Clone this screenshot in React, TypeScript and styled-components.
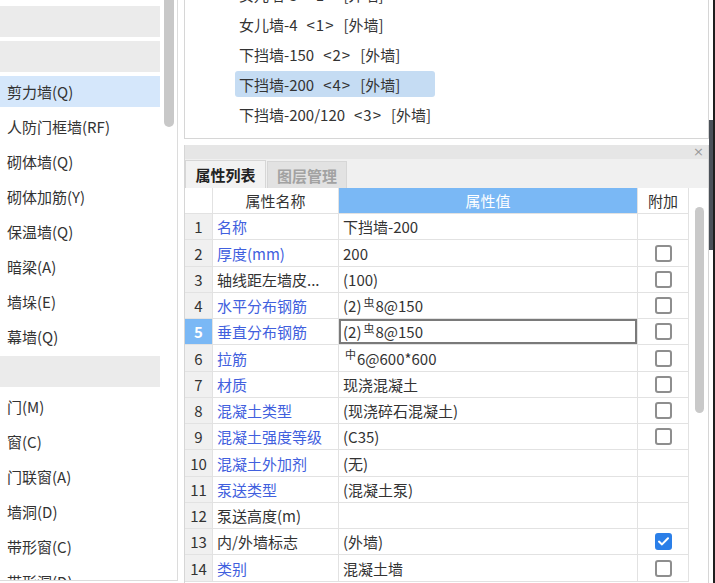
import React from "react";
import styled, { createGlobalStyle } from "styled-components";

const Global = createGlobalStyle`
  html, body { margin: 0; padding: 0; background: #fff; }
  body { font-family: "Noto Sans CJK SC", "Noto Sans", sans-serif; color: #333; }
  * { box-sizing: border-box; }
`;

const Root = styled.div`
  display: flex;
  width: 715px;
  height: 583px;
  overflow: hidden;
  background: #fff;
  font-size: 15px;
`;

/* ---------- left category panel ---------- */
const LeftPanel = styled.div`
  width: 178px;
  height: 581px;
  flex-shrink: 0;
  display: flex;
  border-right: 1px solid #dcdcdc;
  border-bottom: 1px solid #dcdcdc;
  overflow: hidden;
`;

const CatList = styled.div`
  width: 164px;
  padding-top: 4px;
  display: flex;
  flex-direction: column;
`;

type CatKind = "plain" | "group" | "selected";

const CatItem = styled.div<{ $kind: CatKind }>`
  flex-shrink: 0;
  width: 160px;
  height: 31px;
  margin: 2px 0;
  padding-left: 7px;
  line-height: 31px;
  white-space: nowrap;
  color: #333;
  background: ${(p) =>
    p.$kind === "group" ? "#ebebeb" : p.$kind === "selected" ? "#d5e7fb" : "transparent"};
`;

const VTrack = styled.div`
  width: 13px;
  flex-shrink: 0;
`;

const VThumb = styled.div<{ $h: number }>`
  width: 10px;
  height: ${(p) => p.$h}px;
  background: #c8c8c8;
  border-radius: 0 0 5px 5px;
`;

/* ---------- right column ---------- */
const RightCol = styled.div`
  width: 525px;
  margin-left: 6px;
  flex-shrink: 0;
  display: flex;
  flex-direction: column;
`;

const TreePanel = styled.div`
  height: 139px;
  flex-shrink: 0;
  border: 1px solid #d6d6d6;
  border-top: none;
  overflow: hidden;
`;

const TreeList = styled.div`
  margin-top: -21px;
  padding-left: 50px;
  display: flex;
  flex-direction: column;
`;

const TreeRow = styled.div`
  height: 30px;
  padding: 2px 0;
`;

const TreeLabel = styled.div<{ $sel?: boolean }>`
  width: 200px;
  height: 26px;
  padding-left: 4px;
  border-radius: 3px;
  display: flex;
  align-items: center;
  gap: 9px;
  white-space: nowrap;
  color: #333;
  background: ${(p) => (p.$sel ? "#c5dcf3" : "transparent")};
`;

const Bracket = styled.span`
  letter-spacing: 1px;
`;

const PropPanel = styled.div`
  flex: 1;
  margin-top: 6px;
  display: flex;
  flex-direction: column;
  border-left: 1px solid #d6d6d6;
  border-right: 1px solid #d6d6d6;
  min-height: 0;
`;

const TitleBar = styled.div`
  height: 14px;
  background: #e6e6e6;
  display: flex;
  justify-content: flex-end;
  align-items: center;
  padding-right: 4px;
  color: #9a9a9a;
  font-size: 13px;
  line-height: 14px;
  font-family: "DejaVu Sans", sans-serif;
`;

const TabBar = styled.div`
  height: 29px;
  background: #f0f0f0;
  display: flex;
  align-items: flex-end;
`;

const Tab = styled.div<{ $active?: boolean }>`
  width: ${(p) => (p.$active ? 81 : 80)}px;
  height: ${(p) => (p.$active ? 28 : 27)}px;
  margin-left: ${(p) => (p.$active ? 0 : 1)}px;
  display: flex;
  align-items: center;
  justify-content: center;
  font-weight: bold;
  font-size: 15px;
  color: ${(p) => (p.$active ? "#222" : "#a2a2a2")};
  background: ${(p) => (p.$active ? "#f2f2f2" : "#e2e2e2")};
  border: 1px solid #d6d6d6;
  border-bottom: none;
`;

const TableArea = styled.div`
  flex: 1;
  display: flex;
  min-height: 0;
`;

const Table = styled.div`
  width: 504px;
  display: flex;
  flex-direction: column;
`;

const Row = styled.div<{ $h: number }>`
  display: grid;
  grid-template-columns: 28px 126px 299px 51px;
  height: ${(p) => p.$h}px;
  flex-shrink: 0;
`;

const Cell = styled.div<{ $bg?: string; $align?: "center" | "left"; $color?: string; $bold?: boolean; $focus?: boolean }>`
  display: flex;
  align-items: center;
  justify-content: ${(p) => (p.$align === "center" ? "center" : "flex-start")};
  padding-left: ${(p) => (p.$align === "center" ? 0 : 4)}px;
  border-right: 1px solid #e2e2e2;
  border-bottom: 1px solid #e2e2e2;
  background: ${(p) => p.$bg || "#fff"};
  color: ${(p) => p.$color || "#333"};
  font-weight: ${(p) => (p.$bold ? "bold" : "normal")};
  white-space: nowrap;
  overflow: hidden;
  box-shadow: ${(p) => (p.$focus ? "inset 0 0 0 2px #7a7a7a" : "none")};
`;

const Sym = styled.span`
  font-size: 11px;
  position: relative;
  top: -4px;
  margin: 0 1px 0 2px;
`;

const Box = styled.div<{ $checked?: boolean }>`
  width: 17px;
  height: 17px;
  border-radius: 3px;
  border: 2px solid ${(p) => (p.$checked ? "#2b7fe8" : "#8e8e8e")};
  background: ${(p) => (p.$checked ? "#2b7fe8" : "#fff")};
  display: flex;
  align-items: center;
  justify-content: center;
`;

const HTrack = styled.div`
  width: 19px;
  padding-top: 19px;
`;

const HThumb = styled.div`
  margin-left: 6px;
  width: 9px;
  height: 206px;
  border-radius: 5px;
  background: #c9c9c9;
`;

const Edge = styled.div`
  width: 6px;
  flex-shrink: 0;
  display: flex;
  flex-direction: column;
  border-right: 2px solid #1f1f1f;
`;

const EdgeLight = styled.div`
  height: 120px;
`;

const EdgeDark = styled.div`
  height: 130px;
  background: #4b5159;
`;

/* ---------- data ---------- */
const cats: { t: string; k: CatKind }[] = [
  { t: "", k: "group" },
  { t: "", k: "group" },
  { t: "剪力墙(Q)", k: "selected" },
  { t: "人防门框墙(RF)", k: "plain" },
  { t: "砌体墙(Q)", k: "plain" },
  { t: "砌体加筋(Y)", k: "plain" },
  { t: "保温墙(Q)", k: "plain" },
  { t: "暗梁(A)", k: "plain" },
  { t: "墙垛(E)", k: "plain" },
  { t: "幕墙(Q)", k: "plain" },
  { t: "", k: "group" },
  { t: "门(M)", k: "plain" },
  { t: "窗(C)", k: "plain" },
  { t: "门联窗(A)", k: "plain" },
  { t: "墙洞(D)", k: "plain" },
  { t: "带形窗(C)", k: "plain" },
  { t: "带形洞(D)", k: "plain" },
];

const tree = [
  { name: "女儿墙-3", n: 1 },
  { name: "女儿墙-4", n: 1 },
  { name: "下挡墙-150", n: 2 },
  { name: "下挡墙-200", n: 4, sel: true },
  { name: "下挡墙-200/120", n: 3 },
];

type Prop = {
  name: string;
  blue: boolean;
  value: React.ReactNode;
  cb: "none" | "off" | "on";
};

const BLUE = "#4160de";

const props: Prop[] = [
  { name: "名称", blue: true, value: "下挡墙-200", cb: "none" },
  { name: "厚度(mm)", blue: true, value: "200", cb: "off" },
  { name: "轴线距左墙皮...", blue: false, value: "(100)", cb: "off" },
  { name: "水平分布钢筋", blue: true, value: <>(2)<Sym>虫</Sym>8@150</>, cb: "off" },
  { name: "垂直分布钢筋", blue: true, value: <>(2)<Sym>虫</Sym>8@150</>, cb: "off" },
  { name: "拉筋", blue: true, value: <><Sym>中</Sym>6@600*600</>, cb: "off" },
  { name: "材质", blue: true, value: "现浇混凝土", cb: "off" },
  { name: "混凝土类型", blue: true, value: "(现浇碎石混凝土)", cb: "off" },
  { name: "混凝土强度等级", blue: true, value: "(C35)", cb: "off" },
  { name: "混凝土外加剂", blue: true, value: "(无)", cb: "none" },
  { name: "泵送类型", blue: true, value: "(混凝土泵)", cb: "none" },
  { name: "泵送高度(m)", blue: false, value: "", cb: "none" },
  { name: "内/外墙标志", blue: false, value: "(外墙)", cb: "on" },
  { name: "类别", blue: true, value: "混凝土墙", cb: "off" },
];

const SELECTED_ROW = 5;
const PITCH = 26.25;
const rowH = (i: number) => Math.round((i + 1) * PITCH) - Math.round(i * PITCH);

const Check = () => (
  <svg width="11" height="9" viewBox="0 0 11 9">
    <path d="M1 4.6 L4 7.4 L10 1.2" fill="none" stroke="#fff" strokeWidth="2" strokeLinecap="round" strokeLinejoin="round" />
  </svg>
);

export default function App() {
  return (
    <Root>
      <Global />
      <LeftPanel>
        <CatList>
          {cats.map((c, i) => (
            <CatItem key={i} $kind={c.k}>
              {c.t}
            </CatItem>
          ))}
        </CatList>
        <VTrack>
          <VThumb $h={127} />
        </VTrack>
      </LeftPanel>

      <RightCol>
        <TreePanel>
          <TreeList>
            {tree.map((r, i) => (
              <TreeRow key={i}>
                <TreeLabel $sel={r.sel}>
                  <span>{r.name}</span>
                  <Bracket>{`<${r.n}>`}</Bracket>
                  <span>[外墙]</span>
                </TreeLabel>
              </TreeRow>
            ))}
          </TreeList>
        </TreePanel>

        <PropPanel>
          <TitleBar>×</TitleBar>
          <TabBar>
            <Tab $active>属性列表</Tab>
            <Tab>图层管理</Tab>
          </TabBar>
          <TableArea>
            <Table>
              <Row $h={26}>
                <Cell />
                <Cell $align="center">属性名称</Cell>
                <Cell $align="center" $bg="#7ab8f5" $color="#fff">属性值</Cell>
                <Cell $align="center">附加</Cell>
              </Row>
              {props.map((p, i) => {
                const n = i + 1;
                const sel = n === SELECTED_ROW;
                return (
                  <Row key={n} $h={rowH(i)}>
                    <Cell
                      $align="center"
                      $bg={sel ? "#7ab8f5" : "#f0f0f0"}
                      $color={sel ? "#fff" : "#333"}
                      $bold={sel}
                    >
                      {n}
                    </Cell>
                    <Cell $color={p.blue ? BLUE : "#333"}>{p.name}</Cell>
                    <Cell $focus={sel}>{p.value}</Cell>
                    <Cell $align="center">
                      {p.cb !== "none" && (
                        <Box $checked={p.cb === "on"}>{p.cb === "on" && <Check />}</Box>
                      )}
                    </Cell>
                  </Row>
                );
              })}
            </Table>
            <HTrack>
              <HThumb />
            </HTrack>
          </TableArea>
        </PropPanel>
      </RightCol>

      <Edge>
        <EdgeLight />
        <EdgeDark />
      </Edge>
    </Root>
  );
}
